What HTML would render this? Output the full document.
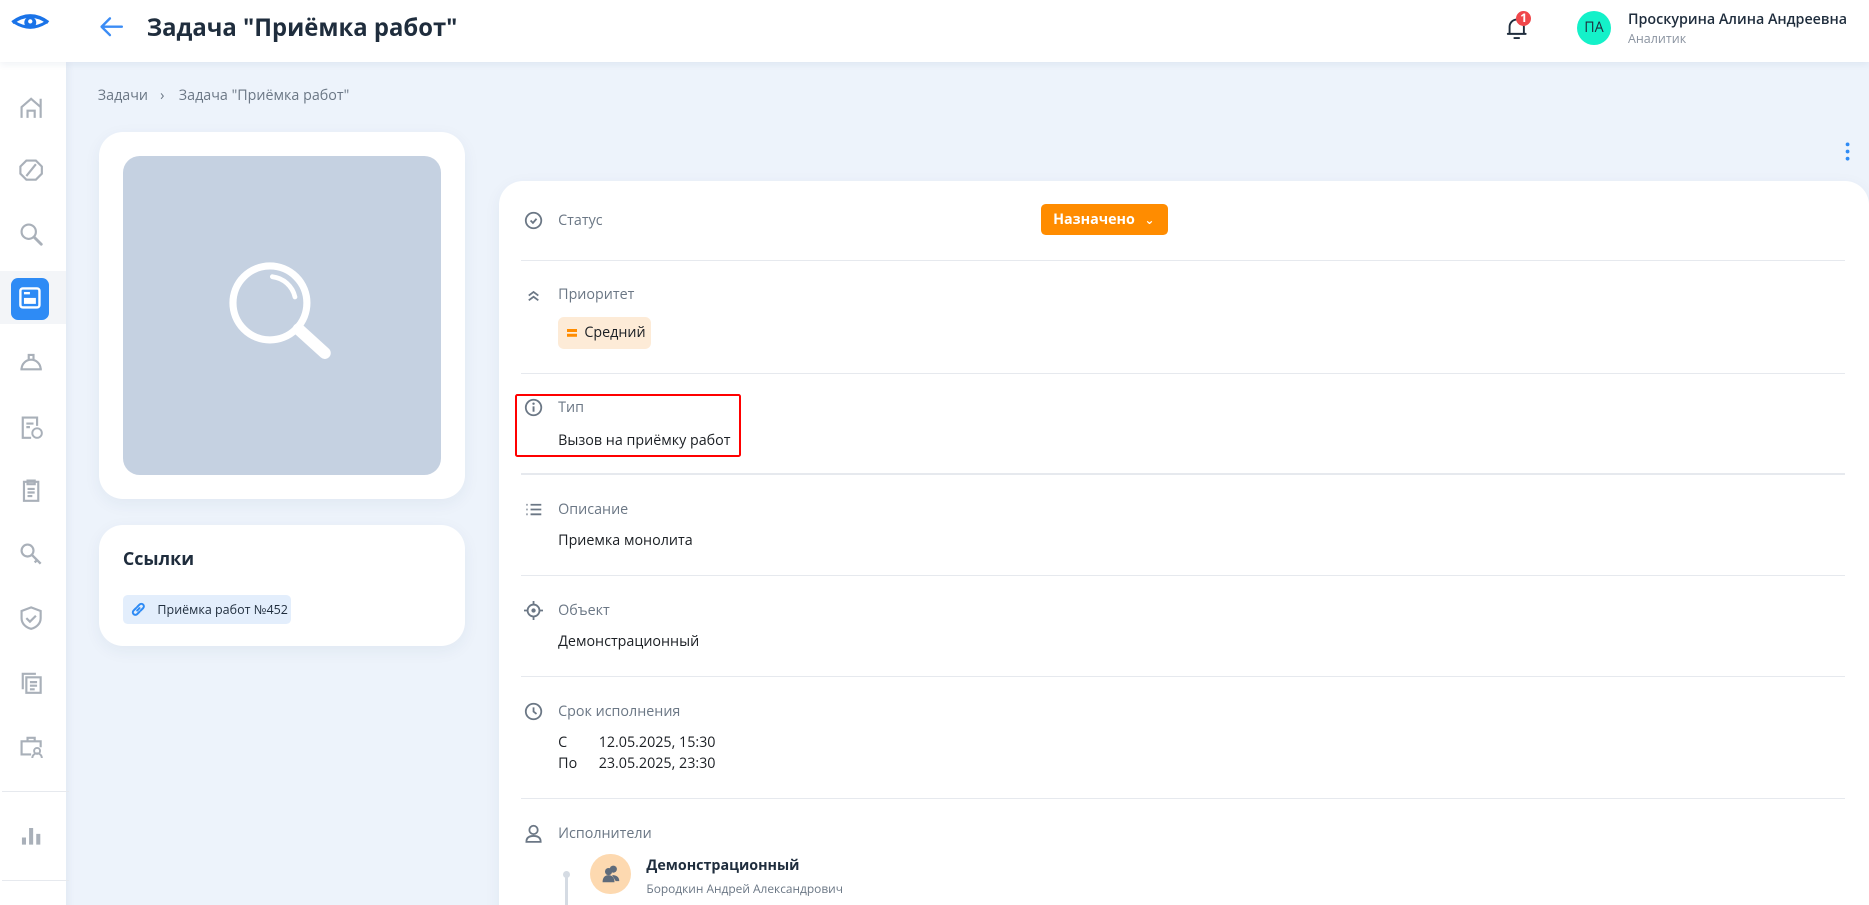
<!DOCTYPE html>
<html><head><meta charset="utf-8"><style>
html,body{margin:0;padding:0;}
body{width:1869px;height:905px;overflow:hidden;background:#edf3fb;font-family:"Open Sans","Liberation Sans","DejaVu Sans",sans-serif;}
#z{zoom:1.19266;width:1567px;height:759px;position:relative;overflow:hidden;background:#edf3fb;}
.a{position:absolute;}
.hdr{left:0;top:0;width:1567px;height:52px;background:#fff;box-shadow:0 2px 6px rgba(30,60,110,.07);z-index:2}
.sb{left:0;top:52px;width:55px;height:720px;background:#fff;box-shadow:2px 0 6px rgba(30,60,110,.06);z-index:1}
.card{background:#fff;border-radius:20px;box-shadow:0 4px 14px rgba(30,60,110,.06);}
.lbl{position:absolute;left:468px;font-size:12px;color:#6b7785;}
.val{position:absolute;left:468px;font-size:12px;color:#1b1f24;}
.div{position:absolute;left:437px;width:1110px;height:1px;background:#e6e9ee;}
.ic{position:absolute;left:439px;width:16px;height:16px;}
.sbi{position:absolute;left:15px;width:22px;height:22px;}
</style></head><body><div id="z">
<div class="a hdr">
 <svg class="a" style="left:8px;top:11px" width="34" height="16" viewBox="0 0 34 16"><path d="M2 8 Q17 -3 32 8" fill="none" stroke="#1a73e8" stroke-width="3"/><path d="M4 8 Q17 16 30 8" fill="none" stroke="#1a73e8" stroke-width="2.5"/><circle cx="17" cy="8" r="5" fill="#1a73e8"/><circle cx="17" cy="7" r="1.8" fill="#fff"/></svg>
 <svg class="a" style="left:82px;top:13px" width="22" height="18" viewBox="0 0 22 18"><path d="M20 9H3M10 2L3 9l7 7" fill="none" stroke="#3b8cf5" stroke-width="2" stroke-linecap="round" stroke-linejoin="round"/></svg>
 <div class="a" style="left:123px;top:9px;font-size:20px;font-weight:700;color:#1f2d3d">Задача "Приёмка работ"</div>
 <svg class="a" style="left:1263px;top:13px" width="18" height="20" viewBox="0 0 18 20"><path d="M3 15V9a6 6 0 0 1 12 0v6M1.5 15h15M7 18.5h4" fill="none" stroke="#1f2d3d" stroke-width="1.6" stroke-linecap="round"/></svg>
 <div class="a" style="left:1271px;top:9px;width:13px;height:13px;border-radius:50%;background:#f0474b;color:#fff;font-size:10px;font-weight:700;text-align:center;line-height:13px">1</div>
 <div class="a" style="left:1322px;top:9px;width:29px;height:29px;border-radius:50%;background:#14f1c9;color:#1f2d3d;font-size:12px;text-align:center;line-height:29px">ПА</div>
 <div class="a" style="left:1365px;top:8px;font-size:12px;color:#1f2d3d;font-weight:600">Проскурина Алина Андреевна</div>
 <div class="a" style="left:1365px;top:25px;font-size:10.5px;color:#8a93a0">Аналитик</div>
</div>
<div class="a sb">
 <svg class="sbi" style="top:27px" viewBox="0 0 22 22"><path d="M3 20V11l8-7 8 7v9M8 20v-6h6v6M19 4v16" fill="none" stroke="#a9b0b9" stroke-width="1.8"/></svg>
 <svg class="sbi" style="top:80px" viewBox="0 0 22 22"><path d="M7 3h8l5 5v6l-5 5H7l-5-5V8z M7 16l8-10" fill="none" stroke="#a9b0b9" stroke-width="1.8"/></svg>
 <svg class="sbi" style="top:133px" viewBox="0 0 22 22"><circle cx="9" cy="9" r="6" fill="none" stroke="#a9b0b9" stroke-width="1.8"/><path d="M13.5 13.5l6 6" stroke="#a9b0b9" stroke-width="2.4" stroke-linecap="round"/></svg>
 <div class="a" style="left:0;top:175px;width:55px;height:45px;background:#f3f5f8"></div>
 <div class="a" style="left:9px;top:181px;width:32px;height:35px;border-radius:6px;background:#2e8bf5"></div>
 <svg class="a" style="left:15px;top:188px" width="20" height="20" viewBox="0 0 20 20"><rect x="2" y="2" width="16" height="16" rx="2" fill="none" stroke="#fff" stroke-width="2"/><rect x="5" y="10" width="10" height="5" fill="#fff"/><path d="M5 6h5" stroke="#fff" stroke-width="2"/></svg>
 <svg class="sbi" style="top:241px" viewBox="0 0 22 22"><path d="M2 17h18M3 17a8 8 0 0 1 16 0M9 9V5h4v4" fill="none" stroke="#a9b0b9" stroke-width="1.8"/></svg>
 <svg class="sbi" style="top:295px" viewBox="0 0 22 22"><path d="M11 20H4V3h12v7M7 8h6M7 11h3" fill="none" stroke="#a9b0b9" stroke-width="1.8"/><circle cx="16" cy="16" r="4" fill="none" stroke="#a9b0b9" stroke-width="1.6"/></svg>
 <svg class="sbi" style="top:348px" viewBox="0 0 22 22"><path d="M5 4h12v16H5z M8 3h6v3H8z M8 10h6M8 13h6M8 16h4" fill="none" stroke="#a9b0b9" stroke-width="1.8"/></svg>
 <svg class="sbi" style="top:402px" viewBox="0 0 22 22"><circle cx="8" cy="8" r="5" fill="none" stroke="#a9b0b9" stroke-width="1.8"/><path d="M12 12l7 7M16 16l-2 2" stroke="#a9b0b9" stroke-width="2"/></svg>
 <svg class="sbi" style="top:455px" viewBox="0 0 22 22"><path d="M11 2l8 3v6c0 5-4 8-8 9-4-1-8-4-8-9V5z M7 11l3 3 5-5" fill="none" stroke="#a9b0b9" stroke-width="1.8"/></svg>
 <svg class="sbi" style="top:509px" viewBox="0 0 22 22"><path d="M4 17V4h11M7 7h12v13H7z M10 11h6M10 14h6M10 17h4" fill="none" stroke="#a9b0b9" stroke-width="1.8"/></svg>
 <svg class="sbi" style="top:563px" viewBox="0 0 22 22"><path d="M11 18H3V7h16v5M8 7V4h6v3" fill="none" stroke="#a9b0b9" stroke-width="1.8"/><circle cx="16" cy="15" r="2.5" fill="none" stroke="#a9b0b9" stroke-width="1.6"/><path d="M12 21a4 4 0 0 1 8 0" fill="none" stroke="#a9b0b9" stroke-width="1.6"/></svg>
 <div class="a" style="left:2px;top:611px;width:56px;height:1px;background:#e6e9ee"></div>
 <svg class="sbi" style="top:637px" viewBox="0 0 22 22"><path d="M5 19v-6M11 19V5M17 19v-9" stroke="#a9b0b9" stroke-width="3.4"/></svg>
 <div class="a" style="left:2px;top:686px;width:56px;height:1px;background:#e6e9ee"></div>
</div>
<div class="a" style="left:82px;top:72px;font-size:12px;color:#6b7785">Задачи <span style="margin:0 9px 0 7px">›</span> Задача "Приёмка работ"</div>
<div class="a card" style="left:83px;top:111px;width:307px;height:307px"></div>
<div class="a" style="left:103px;top:131px;width:267px;height:267px;border-radius:14px;background:#c5d1e1"></div>
<svg class="a" style="left:190px;top:218px" width="92" height="92" viewBox="0 0 92 92"><circle cx="36" cy="36" r="31" fill="none" stroke="#fff" stroke-width="6"/><path d="M38 14a22 22 0 0 1 19 17" fill="none" stroke="#fff" stroke-width="4" stroke-linecap="round"/><path d="M60 58l22 20" stroke="#fff" stroke-width="10" stroke-linecap="round"/></svg>
<div class="a card" style="left:83px;top:440px;width:307px;height:102px"></div>
<div class="a" style="left:103px;top:459px;font-size:15px;font-weight:700;color:#1f2d3d">Ссылки</div>
<div class="a" style="left:103px;top:499px;width:141px;height:24px;border-radius:4px;background:#e3eefc"></div>
<svg class="a" style="left:109px;top:504px" width="14" height="14" viewBox="0 0 14 14"><path d="M6 8l2-2M5 6L3 8a2 2 0 0 0 3 3l2-2M9 8l2-2a2 2 0 0 0-3-3L6 5" fill="none" stroke="#2e8bf5" stroke-width="1.7" stroke-linecap="round"/></svg>
<div class="a" style="left:132px;top:504px;font-size:10.5px;color:#1f2d3d">Приёмка работ №452</div>
<svg class="a" style="left:1546px;top:119px" width="6" height="16" viewBox="0 0 6 16"><circle cx="3" cy="2" r="1.6" fill="#2e8bf5"/><circle cx="3" cy="8" r="1.6" fill="#2e8bf5"/><circle cx="3" cy="14" r="1.6" fill="#2e8bf5"/></svg>
<div class="a card" style="left:418px;top:152px;width:1149px;height:640px"></div>
<svg class="ic" style="top:177px" viewBox="0 0 16 16"><circle cx="8" cy="8" r="6.5" fill="none" stroke="#6b7785" stroke-width="1.5"/><path d="M5.5 8l2 2 3-3.5" fill="none" stroke="#6b7785" stroke-width="1.5"/></svg>
<div class="lbl" style="top:177px">Статус</div>
<div class="a" style="left:873px;top:171px;width:106px;height:26px;border-radius:4px;background:#ff8c00;color:#fff;font-size:12px;font-weight:700;line-height:26px;padding-left:10px;box-sizing:border-box">Назначено <span style="font-size:10px;margin-left:5px">⌄</span></div>
<div class="div" style="top:218px"></div>
<svg class="ic" style="top:240px" viewBox="0 0 16 16"><path d="M4 8l4-3 4 3M4 12l4-3 4 3" fill="none" stroke="#6b7785" stroke-width="1.5"/></svg>
<div class="lbl" style="top:239px">Приоритет</div>
<div class="a" style="left:468px;top:266px;width:78px;height:27px;border-radius:5px;background:#fdebd7"></div>
<div class="a" style="left:475px;top:276px;width:9px;height:2px;background:#ff8c00;box-shadow:0 4px 0 #ff8c00"></div>
<div class="a" style="left:490px;top:271px;font-size:12px;color:#1b1f24">Средний</div>
<div class="div" style="top:313px"></div>
<svg class="ic" style="top:334px" viewBox="0 0 16 16"><circle cx="8" cy="8" r="6.5" fill="none" stroke="#6b7785" stroke-width="1.5"/><path d="M8 7v4.5" stroke="#6b7785" stroke-width="1.6"/><circle cx="8" cy="4.8" r="1" fill="#6b7785"/></svg>
<div class="lbl" style="top:334px">Тип</div>
<div class="val" style="top:361px">Вызов на приёмку работ</div>
<div class="a" style="left:432px;top:330px;width:186px;height:50px;border:2.5px solid #f00;border-radius:2px"></div>
<div class="div" style="top:397px"></div>
<svg class="ic" style="top:419px" viewBox="0 0 16 16"><path d="M2 4h1M2 8h1M2 12h1M5.5 4h9M5.5 8h9M5.5 12h9" stroke="#6b7785" stroke-width="1.5"/></svg>
<div class="lbl" style="top:419px">Описание</div>
<div class="val" style="top:445px">Приемка монолита</div>
<div class="div" style="top:482px"></div>
<svg class="ic" style="top:504px" viewBox="0 0 16 16"><circle cx="8" cy="8" r="5" fill="none" stroke="#6b7785" stroke-width="1.5"/><circle cx="8" cy="8" r="1.8" fill="#6b7785"/><path d="M8 0v3M8 13v3M0 8h3M13 8h3" stroke="#6b7785" stroke-width="1.5"/></svg>
<div class="lbl" style="top:504px">Объект</div>
<div class="val" style="top:530px">Демонстрационный</div>
<div class="div" style="top:567px"></div>
<svg class="ic" style="top:589px" viewBox="0 0 16 16"><circle cx="8" cy="8" r="6.5" fill="none" stroke="#6b7785" stroke-width="1.5"/><path d="M8 4.5V8l2.5 2" fill="none" stroke="#6b7785" stroke-width="1.5"/></svg>
<div class="lbl" style="top:589px">Срок исполнения</div>
<div class="val" style="top:615px">С</div><div class="val" style="left:502px;top:615px">12.05.2025, 15:30</div>
<div class="val" style="top:632px">По</div><div class="val" style="left:502px;top:632px">23.05.2025, 23:30</div>
<div class="div" style="top:669px"></div>
<svg class="ic" style="top:691px" viewBox="0 0 16 16"><circle cx="8" cy="5" r="3.5" fill="none" stroke="#6b7785" stroke-width="1.5"/><path d="M2 15c0-4 3-5 6-5s6 1 6 5z" fill="none" stroke="#6b7785" stroke-width="1.5"/></svg>
<div class="lbl" style="top:691px">Исполнители</div>
<div class="a" style="left:472px;top:730px;width:6px;height:6px;border-radius:50%;background:#d5dbe3"></div>
<div class="a" style="left:474px;top:734px;width:2px;height:30px;background:#d5dbe3"></div>
<div class="a" style="left:495px;top:716px;width:34px;height:34px;border-radius:50%;background:#fdd9b0"></div>
<svg class="a" style="left:502px;top:723px" width="20" height="20" viewBox="0 0 20 20"><circle cx="12" cy="6" r="3" fill="#5f6b7a"/><circle cx="8" cy="8" r="3" fill="#5f6b7a"/><path d="M3 17c0-4 2-6 5-6s5 2 5 6zM11 11c3 0 6 1 6 5h-3" fill="#5f6b7a"/></svg>
<div class="a" style="left:542px;top:718px;font-size:12px;font-weight:700;color:#1f2d3d">Демонстрационный</div>
<div class="a" style="left:542px;top:739px;font-size:10px;color:#6b7785">Бородкин Андрей Александрович</div>
</div></body></html>
